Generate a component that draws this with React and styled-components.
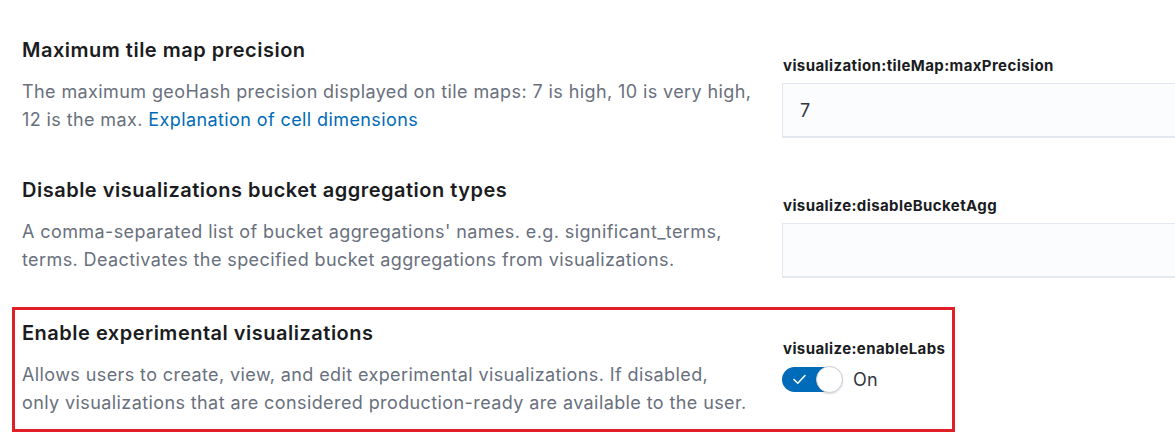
import styled, { createGlobalStyle } from "styled-components";

const GlobalStyle = createGlobalStyle`
  body {
    margin: 0;
    background: #ffffff;
    font-family: Inter, "Noto Sans", "Liberation Sans", sans-serif;
    overflow: hidden;
  }
`;

const Page = styled.div`
  width: 1175px;
  height: 446px;
  padding: 38px 0 0 12px;
  box-sizing: border-box;
  display: flex;
  flex-direction: column;
  gap: 40px;
`;

const Row = styled.div`
  display: grid;
  grid-template-columns: 752px 420px;
  column-gap: 8px;
  box-sizing: border-box;
  padding-left: ${(props) => (props.highlight ? "7px" : "10px")};
  ${(props) =>
    props.highlight &&
    `
    width: 943px;
    border: 3px solid #e11f27;
    padding-top: 11px;
    padding-bottom: 12px;
    margin-top: -11px;
    grid-template-columns: 752px 1fr;
  `}
`;

const Info = styled.div`
  display: flex;
  flex-direction: column;
  gap: 16px;
`;

const Title = styled.h3`
  margin: 0;
  font-size: 20px;
  line-height: 24px;
  font-weight: 600;
  letter-spacing: 0.5px;
  color: #1a1c21;
`;

const Description = styled.p`
  margin: 0;
  font-size: 18px;
  line-height: 28px;
  letter-spacing: 0.4px;
  color: #69707d;
`;

const Link = styled.a`
  color: #006bb8;
  text-decoration: none;
`;

const Field = styled.div`
  display: flex;
  flex-direction: column;
  gap: 8px;
  padding-top: 19px;
`;

const Label = styled.label`
  font-size: 15px;
  line-height: 18px;
  font-weight: 700;
  letter-spacing: 0.4px;
  color: #1a1c21;
  padding-left: 1px;
`;

const Input = styled.div`
  height: 55px;
  box-sizing: border-box;
  background: #fbfcfd;
  border: 1px solid #e3e7ef;
  border-bottom: 2px solid #e3e7ef;
  display: flex;
  align-items: center;
  padding-left: 17px;
  font-size: 18px;
  color: #343741;
`;

const SwitchRow = styled.div`
  display: flex;
  align-items: center;
  gap: 11px;
  height: 27px;
`;

const Track = styled.div`
  position: relative;
  width: 60px;
  height: 25px;
  border-radius: 13px;
  background: #006bb8;
  display: flex;
  align-items: center;
  padding-left: 11px;
  box-sizing: border-box;
`;

const Knob = styled.span`
  position: absolute;
  right: -1px;
  top: -1px;
  width: 27px;
  height: 27px;
  border-radius: 50%;
  background: #ffffff;
  border: 1px solid #c9cfd8;
  box-sizing: border-box;
  box-shadow: 0 1px 2px rgba(0, 0, 0, 0.15);
`;

const SwitchLabel = styled.span`
  font-size: 18px;
  letter-spacing: 0.3px;
  color: #343741;
`;

const Check = () => (
  <svg width="13" height="11" viewBox="0 0 13 11" fill="none">
    <path
      d="M1 5.5 L4.8 9.2 L12 1.5"
      stroke="#ffffff"
      strokeWidth="1.5"
      strokeLinecap="round"
      strokeLinejoin="round"
    />
  </svg>
);

const App = () => {
  return (
    <>
      <GlobalStyle />
      <Page>
        <Row>
          <Info>
            <Title>Maximum tile map precision</Title>
            <Description>
              The maximum geoHash precision displayed on tile maps: 7 is high, 10
              is very high, 12 is the max.{" "}
              <Link href="#">Explanation of cell dimensions</Link>
            </Description>
          </Info>
          <Field>
            <Label>visualization:tileMap:maxPrecision</Label>
            <Input>7</Input>
          </Field>
        </Row>
        <Row>
          <Info>
            <Title>Disable visualizations bucket aggregation types</Title>
            <Description>
              A comma-separated list of bucket aggregations' names. e.g.
              significant_terms, terms. Deactivates the specified bucket
              aggregations from visualizations.
            </Description>
          </Info>
          <Field>
            <Label>visualize:disableBucketAgg</Label>
            <Input />
          </Field>
        </Row>
        <Row highlight>
          <Info>
            <Title>Enable experimental visualizations</Title>
            <Description>
              Allows users to create, view, and edit experimental visualizations.
              If disabled,
              <br />
              only visualizations that are considered production-ready are
              available to the user.
            </Description>
          </Info>
          <Field>
            <Label>visualize:enableLabs</Label>
            <SwitchRow>
              <Track>
                <Check />
                <Knob />
              </Track>
              <SwitchLabel>On</SwitchLabel>
            </SwitchRow>
          </Field>
        </Row>
      </Page>
    </>
  );
};

export default App;
